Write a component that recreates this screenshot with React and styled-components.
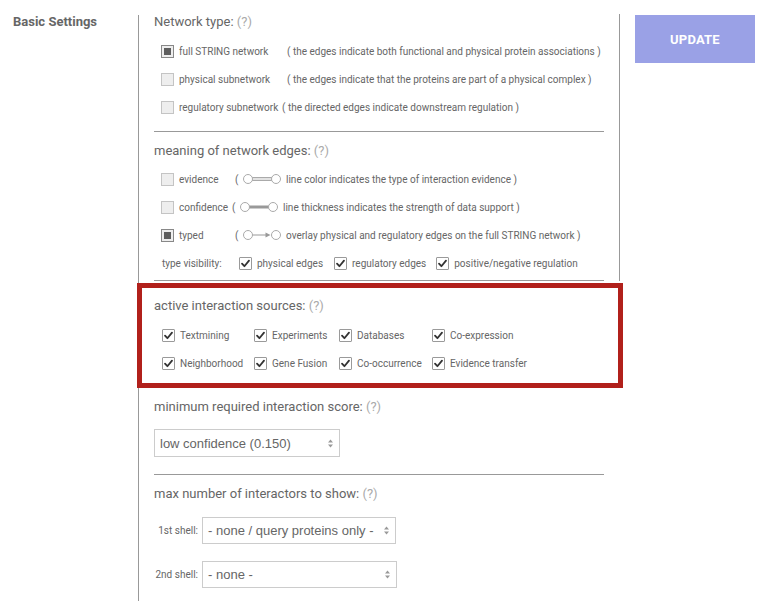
import React from 'react';
import styled, { createGlobalStyle } from 'styled-components';

const GlobalStyle = createGlobalStyle`
  html, body { margin: 0; padding: 0; background: #fff; }
  body { font-family: Roboto, "Liberation Sans", Arial, sans-serif; color: #666; }
`;

const Page = styled.div`
  display: flex;
  align-items: stretch;
  padding-top: 15px;
  min-height: 601px;
  box-sizing: border-box;
`;

const LeftCol = styled.div`
  width: 138px;
  flex-shrink: 0;
  padding-left: 13px;
  box-sizing: border-box;
`;

const BlockTitle = styled.div`
  margin-top: -1px;
  font-size: 13px;
  line-height: 16px;
  font-weight: 700;
  color: #666;
`;

const Main = styled.div`
  width: 481px;
  flex-shrink: 0;
  box-sizing: border-box;
  border-left: 1px solid #999;
  padding: 0 15px 14px 15px;
`;

const UpperGroup = styled.div`
  margin-right: -16px;
  padding-right: 15px;
  border-right: 1px solid #999;
`;

const Section = styled.div`
  padding-top: ${p => p.$pt || 0}px;
  padding-bottom: ${p => p.$pb || 0}px;
  margin-top: ${p => p.$mt || 0}px;
  border-bottom: ${p => (p.$divider ? '1px solid #999' : 'none')};
`;

const Heading = styled.div`
  font-size: 13px;
  line-height: 16px;
  color: #666;
  margin-top: ${p => p.$mt || 0}px;
  white-space: nowrap;
`;

const Help = styled.span`
  color: #aaa;
`;

const OptionList = styled.div`
  display: flex;
  flex-direction: column;
  margin-top: ${p => p.$mt}px;
`;

const OptionRow = styled.div`
  display: flex;
  align-items: center;
  height: 28px;
  padding-left: ${p => p.$pl || 7}px;
  font-size: 10px;
  color: #666;
  white-space: nowrap;
`;

const RadioBox = styled.span`
  width: 13px;
  height: 13px;
  box-sizing: border-box;
  flex-shrink: 0;
  border: 1px solid ${p => (p.$on ? '#888' : '#c4c4c4')};
  background: ${p => (p.$on ? '#eee' : '#eee')};
  padding: 2px;
  display: flex;
  &::after {
    content: '';
    flex: 1;
    background: ${p => (p.$on ? '#5e5e5e' : 'transparent')};
  }
`;

const CheckBox = styled.span`
  width: 13px;
  height: 13px;
  box-sizing: border-box;
  flex-shrink: 0;
  border: 1px solid #9a9a9a;
  border-radius: 1px;
  background: #fff;
  display: flex;
  align-items: center;
  justify-content: center;
`;

const OptLabel = styled.span`
  width: ${p => p.$w}px;
  margin-left: 5px;
  flex-shrink: 0;
`;

const Paren = styled.span`
  width: 8px;
  flex-shrink: 0;
`;

const Desc = styled.span`
  margin-left: ${p => p.$ml || 0}px;
`;

const VisLabel = styled.span`
  width: 77px;
  flex-shrink: 0;
`;

const VisItem = styled.label`
  display: flex;
  align-items: center;
  gap: 5px;
  margin-right: ${p => p.$mr}px;
`;

const SourcesBox = styled.div`
  margin: 2px -19px 0 -17px;
  border: 5px solid #b1201b;
  padding: 10px 0 6px 12px;
  position: relative;
`;

const SourcesGrid = styled.div`
  display: grid;
  grid-template-columns: 92px 85px 93px auto;
  grid-auto-rows: 28px;
  margin-top: 7px;
  padding-left: 8px;
`;

const SourceItem = styled.label`
  display: flex;
  align-items: center;
  gap: 5px;
  font-size: 10px;
  color: #666;
  white-space: nowrap;
`;

const SelectBox = styled.div`
  width: ${p => p.$w}px;
  height: ${p => p.$h}px;
  margin-top: ${p => p.$mt || 0}px;
  box-sizing: border-box;
  border: 1px solid #ccc;
  background: #fff;
  display: flex;
  align-items: center;
  justify-content: space-between;
  padding: 0 6px 0 5px;
  font-family: "Liberation Sans", Arial, sans-serif;
  font-size: 13px;
  color: #666;
  white-space: nowrap;
`;

const ShellRow = styled.div`
  display: flex;
  align-items: center;
  margin-top: ${p => p.$mt}px;
`;

const ShellLabel = styled.span`
  width: 44px;
  margin-right: 4px;
  text-align: right;
  font-size: 10px;
  color: #666;
  white-space: nowrap;
`;

const UpdateButton = styled.div`
  align-self: flex-start;
  margin-left: 16px;
  width: 120px;
  height: 48px;
  background: #9aa1e6;
  color: #fff;
  font-size: 13px;
  font-weight: 700;
  display: flex;
  align-items: center;
  justify-content: center;
  letter-spacing: 0.2px;
`;

const Check = () => (
  <svg width="11" height="11" viewBox="0 0 11 11">
    <path d="M2 5.6 L4.4 8.2 L9 2.6" fill="none" stroke="#333" strokeWidth="1.8" strokeLinecap="round" strokeLinejoin="round" />
  </svg>
);

const Arrows = () => (
  <svg width="5" height="9" viewBox="0 0 5 9">
    <path d="M0 3.6 L2.5 0.4 L5 3.6 Z" fill="#999" />
    <path d="M0 5.4 L2.5 8.6 L5 5.4 Z" fill="#999" />
  </svg>
);

const EdgeGlyph = ({ kind }) => (
  <svg width="38" height="12" viewBox="0 0 38 12" style={{ flexShrink: 0 }}>
    {kind === 'evidence' && (
      <>
        <rect x="9" y="4" width="20" height="4" fill="#e2e2e2" />
        <line x1="9" y1="4.5" x2="29" y2="4.5" stroke="#aaa" />
        <line x1="9" y1="7.5" x2="29" y2="7.5" stroke="#aaa" />
      </>
    )}
    {kind === 'confidence' && <line x1="9" y1="6" x2="29" y2="6" stroke="#999" strokeWidth="3" />}
    {kind === 'typed' && (
      <>
        <line x1="9" y1="6" x2="24" y2="6" stroke="#999" />
        <path d="M22.5 3.6 L27.5 6 L22.5 8.4 Z" fill="#999" />
      </>
    )}
    <circle cx="5" cy="6" r="4.5" fill="#fff" stroke="#aaa" />
    <circle cx="33" cy="6" r="4.5" fill="#fff" stroke="#aaa" />
  </svg>
);

const networkTypes = [
  { label: 'full STRING network', w: 108, on: true, desc: '( the edges indicate both functional and physical protein associations )' },
  { label: 'physical subnetwork', w: 108, on: false, desc: '( the edges indicate that the proteins are part of a physical complex )' },
  { label: 'regulatory subnetwork', w: 103, on: false, desc: '( the directed edges indicate downstream regulation )' },
];

const edgeMeanings = [
  { label: 'evidence', w: 56, on: false, kind: 'evidence', desc: 'line color indicates the type of interaction evidence )' },
  { label: 'confidence', w: 53, on: false, kind: 'confidence', desc: 'line thickness indicates the strength of data support )' },
  { label: 'typed', w: 56, on: true, kind: 'typed', desc: 'overlay physical and regulatory edges on the full STRING network )' },
];

const visibility = [
  { label: 'physical edges', mr: 11 },
  { label: 'regulatory edges', mr: 10 },
  { label: 'positive/negative regulation', mr: 0 },
];

const sources = [
  'Textmining', 'Experiments', 'Databases', 'Co-expression',
  'Neighborhood', 'Gene Fusion', 'Co-occurrence', 'Evidence transfer',
];

export default function App() {
  return (
    <>
      <GlobalStyle />
      <Page>
        <LeftCol>
          <BlockTitle>Basic Settings</BlockTitle>
        </LeftCol>
        <Main>
          <UpperGroup>
            <Section $pb={10} $divider>
              <Heading $mt={-1}>Network type: <Help>(?)</Help></Heading>
              <OptionList $mt={7}>
                {networkTypes.map(t => (
                  <OptionRow key={t.label}>
                    <RadioBox $on={t.on} />
                    <OptLabel $w={t.w}>{t.label}</OptLabel>
                    <Desc>{t.desc}</Desc>
                  </OptionRow>
                ))}
              </OptionList>
            </Section>
            <Section $pt={11} $pb={3} $divider>
              <Heading>meaning of network edges: <Help>(?)</Help></Heading>
              <OptionList $mt={6}>
                {edgeMeanings.map(e => (
                  <OptionRow key={e.label}>
                    <RadioBox $on={e.on} />
                    <OptLabel $w={e.w}>{e.label}</OptLabel>
                    <Paren>(</Paren>
                    <EdgeGlyph kind={e.kind} />
                    <Desc $ml={5}>{e.desc}</Desc>
                  </OptionRow>
                ))}
                <OptionRow $pl={8}>
                  <VisLabel>type visibility:</VisLabel>
                  {visibility.map(v => (
                    <VisItem key={v.label} $mr={v.mr}>
                      <CheckBox><Check /></CheckBox>
                      <span>{v.label}</span>
                    </VisItem>
                  ))}
                </OptionRow>
              </OptionList>
            </Section>
          </UpperGroup>

          <SourcesBox>
            <Heading>active interaction sources: <Help>(?)</Help></Heading>
            <SourcesGrid>
              {sources.map(s => (
                <SourceItem key={s}>
                  <CheckBox><Check /></CheckBox>
                  <span>{s}</span>
                </SourceItem>
              ))}
            </SourcesGrid>
          </SourcesBox>

          <Section $mt={11} $pb={17} $divider>
            <Heading>minimum required interaction score: <Help>(?)</Help></Heading>
            <SelectBox $w={186} $h={28} $mt={14}>
              <span>low confidence (0.150)</span>
              <Arrows />
            </SelectBox>
          </Section>

          <Section $pt={11}>
            <Heading>max number of interactors to show: <Help>(?)</Help></Heading>
            <ShellRow $mt={15}>
              <ShellLabel>1st shell:</ShellLabel>
              <SelectBox $w={194} $h={27}>
                <span>- none / query proteins only -</span>
                <Arrows />
              </SelectBox>
            </ShellRow>
            <ShellRow $mt={17}>
              <ShellLabel>2nd shell:</ShellLabel>
              <SelectBox $w={195} $h={27}>
                <span>- none -</span>
                <Arrows />
              </SelectBox>
            </ShellRow>
          </Section>
        </Main>
        <UpdateButton>UPDATE</UpdateButton>
      </Page>
    </>
  );
}
